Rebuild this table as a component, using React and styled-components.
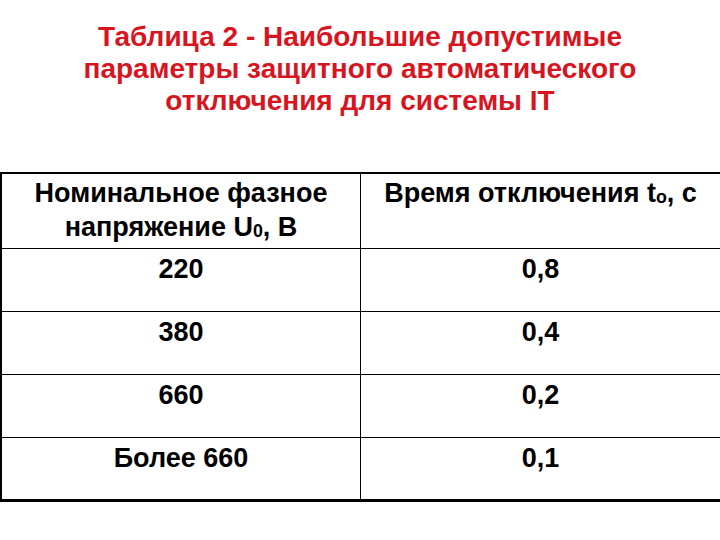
import React from "react";
import styled, { createGlobalStyle } from "styled-components";

const Global = createGlobalStyle`
  html, body { margin: 0; padding: 0; background: #fff; }
  body { font-family: "Liberation Sans", Arial, sans-serif; }
`;

const Page = styled.div`
  width: 720px;
  height: 540px;
  background: #fff;
  display: flex;
  flex-direction: column;
  overflow: hidden;
`;

const Title = styled.h1`
  margin: 0;
  padding-top: 21px;
  height: 172px;
  box-sizing: border-box;
  text-align: center;
  color: #d8141e;
  font-weight: bold;
  font-size: 28px;
  line-height: 32px;
  white-space: nowrap;
`;

const Table = styled.table`
  width: 719px;
  border-collapse: collapse;
  table-layout: fixed;
  border-top: 2px solid #000;
  border-bottom: 3px solid #000;
  border-left: 2px solid #000;
  border-right: 2px solid #000;
`;

const Row = styled.tr`
  height: ${(p) => p.$h}px;
`;

const Cell = styled.td`
  width: ${(p) => p.$w}px;
  padding: ${(p) => (p.$head ? 2 : 3)}px 0 0;
  vertical-align: top;
  text-align: center;
  font-weight: bold;
  font-size: 27px;
  line-height: 34px;
  color: #000;
  white-space: nowrap;
  border-left: ${(p) => (p.$first ? "0" : "1px solid #000")};
  border-top: 1px solid #000;
`;

const Sub = styled.span`
  font-size: 0.66em;
  vertical-align: -1px;
`;

const rows = [
  ["220", "0,8"],
  ["380", "0,4"],
  ["660", "0,2"],
  ["Более 660", "0,1"],
];

export default function App() {
  return (
    <Page>
      <Global />
      <Title>
        Таблица 2 - Наибольшие допустимые
        <br />
        параметры защитного автоматического
        <br />
        отключения для системы IT
      </Title>
      <Table>
        <tbody>
          <Row $h={72}>
            <Cell $first $head $w={358}>
              Номинальное фазное
              <br />
              напряжение U<Sub>0</Sub>, В
            </Cell>
            <Cell $head $w={359}>
              Время отключения t<Sub>o</Sub>, с
            </Cell>
          </Row>
          {rows.map(([a, b]) => (
            <Row key={a} $h={63}>
              <Cell $first>{a}</Cell>
              <Cell>{b}</Cell>
            </Row>
          ))}
        </tbody>
      </Table>
    </Page>
  );
}
